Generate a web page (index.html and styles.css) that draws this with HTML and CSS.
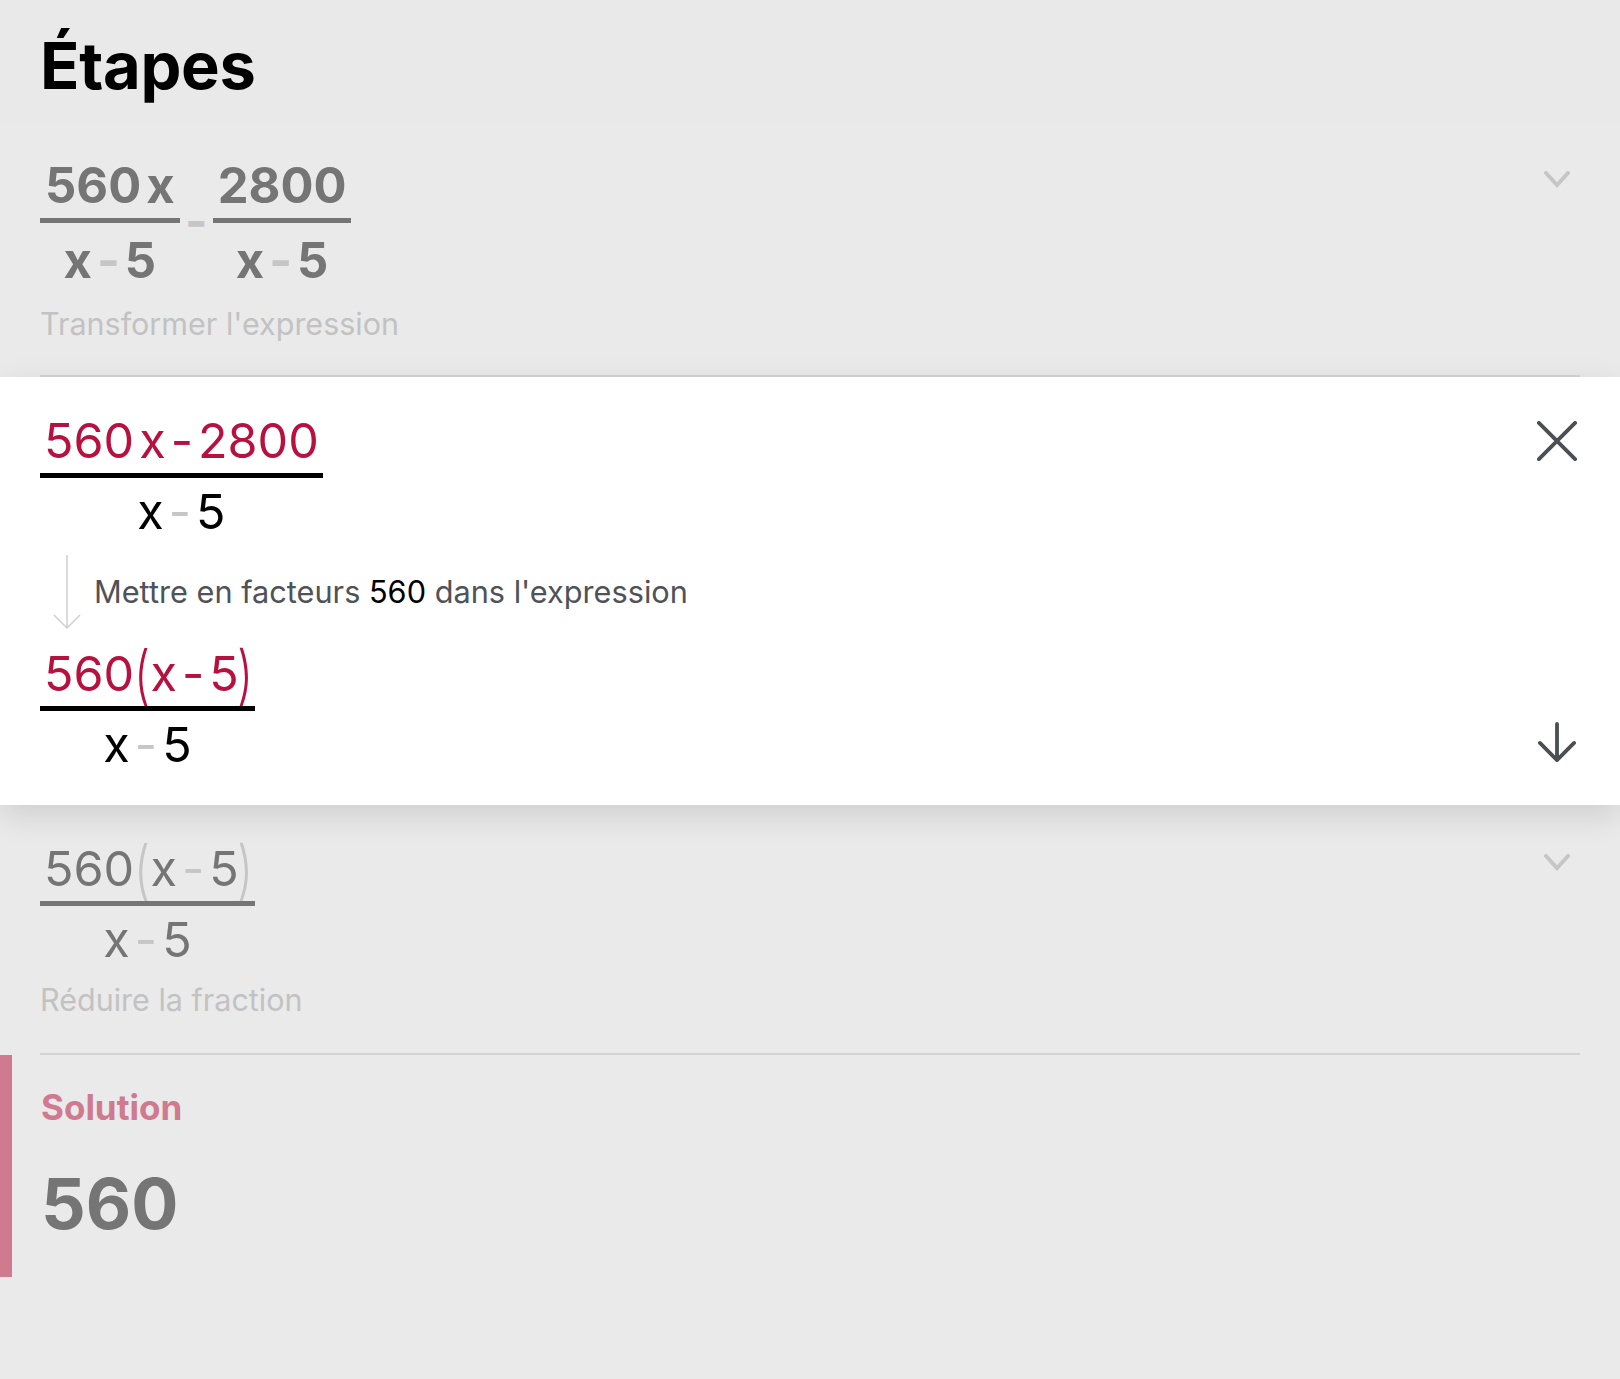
FILE: index.html
```html
<!DOCTYPE html>
<html lang="fr">
<head>
  <meta charset="UTF-8" />
  <meta name="viewport" content="width=device-width, initial-scale=1" />
  <title>Étapes</title>
  <link rel="stylesheet" href="styles.css">
</head>
<body>
  <div class="page">
    <h1 class="title">Étapes</h1>

    <!-- etape 1 -->
    <div class="step step-first">
      <div class="step-head">
        <div class="expr bold">
          <div class="frac">
            <div class="num"><span>560</span><span class="var">x</span></div>
            <div class="den"><span>x</span><span class="minus">-</span><span>5</span></div>
          </div>
          <span class="op">-</span>
          <div class="frac">
            <div class="num"><span>2800</span></div>
            <div class="den"><span>x</span><span class="minus">-</span><span>5</span></div>
          </div>
        </div>
        <svg class="chevron" viewBox="0 0 26 18"><path d="M2 2l11 12L24 2" /></svg>
      </div>
      <p class="hint">Transformer l'expression</p>
    </div>

    <!-- etape ouverte -->
    <div class="detail">
      <div class="detail-top">
        <div class="frac frac-open">
          <div class="num red"><span>560</span><span class="var">x</span><span class="red-minus">-</span><span>2800</span></div>
          <div class="den"><span>x</span><span class="minus">-</span><span>5</span></div>
        </div>
        <svg class="icon-close" viewBox="0 0 42 42"><path d="M2 2l38 38M40 2L2 40" /></svg>
      </div>
      <div class="explain">
        <svg class="flow-arrow" viewBox="0 0 28 74"><path d="M14 0v73M1 60l13 13 13-13" /></svg>
        <p class="explain-text">Mettre en facteurs <span class="dark">560</span> dans l'expression</p>
      </div>
      <div class="detail-bottom">
        <div class="frac frac-open">
          <div class="num red"><span>560</span><span class="paren paren-open">(</span><span>x</span><span class="red-minus">-</span><span>5</span><span class="paren">)</span></div>
          <div class="den"><span>x</span><span class="minus">-</span><span>5</span></div>
        </div>
        <svg class="icon-down" viewBox="0 0 40 42"><path d="M20 2v38M2 22l18 18 18-18" /></svg>
      </div>
    </div>

    <!-- etape 3 -->
    <div class="step step-last">
      <div class="step-head">
        <div class="expr">
          <div class="frac frac-open">
            <div class="num"><span>560</span><span class="paren paren-open pale">(</span><span>x</span><span class="minus">-</span><span>5</span><span class="paren pale">)</span></div>
            <div class="den"><span>x</span><span class="minus">-</span><span>5</span></div>
          </div>
        </div>
        <svg class="chevron" viewBox="0 0 26 18"><path d="M2 2l11 12L24 2" /></svg>
      </div>
      <p class="hint">Réduire la fraction</p>
    </div>

    <div class="solution">
      <h2 class="solution-title">Solution</h2>
      <div class="solution-value">560</div>
    </div>
  </div>
</body>
</html>
```
FILE: styles.css
```css
* {
  box-sizing: border-box;
}

body {
  margin: 0;
  font-family: Inter, "Noto Sans", sans-serif;
  background-color: #eaeaeb;
}

.page {
  height: 100vh;
  overflow: hidden;
}

.title {
  margin: 0;
  padding: 23px 40px 0;
  height: 125px;
  font-size: 65px;
  line-height: 86px;
  font-weight: 700;
  letter-spacing: -0.3px;
  color: #000;
  background-color: #e9e9ea;
}

.step {
  margin: 0 40px;
  border-bottom: 2px solid #d3d3d4;
}

.step-first {
  height: 252px;
  padding-top: 32px;
}

.step-last {
  height: 250px;
  padding-top: 35px;
}

.step-head {
  display: flex;
  justify-content: space-between;
  align-items: flex-start;
}

.expr {
  display: flex;
  align-items: flex-start;
  color: #757575;
}

.bold {
  font-weight: 700;
}

.frac {
  display: flex;
  flex-direction: column;
  align-items: center;
  font-size: 49px;
}

.num {
  display: flex;
  justify-content: center;
  align-items: center;
  height: 66px;
  padding: 0 4px 4px;
  border-bottom: 5px solid currentColor;
}

.bold .num {
  padding: 0 5px 4px;
}

.den {
  display: flex;
  justify-content: center;
  align-items: center;
  height: 74px;
}

.var {
  margin-left: 5px;
}

.minus {
  margin: 0 5px;
  color: #c6c6c7;
}

.op {
  width: 33px;
  margin-top: 33px;
  text-align: center;
  font-size: 48px;
  line-height: 62px;
  color: #c6c6c7;
}

.hint {
  margin: 5px 0 0;
  font-size: 30.5px;
  line-height: 44px;
  color: #c2c2c3;
}

.step-last .hint {
  margin-top: 6px;
}

.chevron {
  width: 26px;
  height: 18px;
  margin: 14px 10px 0 0;
  fill: none;
  stroke: #c6c6c7;
  stroke-width: 4;
  stroke-linecap: round;
}

.detail {
  position: relative;
  height: 428px;
  padding: 35px 43px 0 40px;
  background-color: #fff;
  box-shadow: 0 10px 30px rgba(0, 0, 0, 0.12);
}

.detail-top,
.detail-bottom {
  display: flex;
  justify-content: space-between;
}

.detail-bottom {
  align-items: flex-end;
  margin-top: 5px;
}

.frac-open {
  color: #000;
  font-size: 48.5px;
}

.expr .frac-open {
  color: #757575;
}

.frac-open .den {
  height: 66px;
  font-weight: 400;
}

.frac-open .num {
  border-bottom-color: #000;
}

.expr .frac-open .num {
  border-bottom-color: #757575;
}

.frac-open .red {
  color: #b8113f;
}

.red-minus {
  margin: 0 5px;
}

.paren {
  font-size: 64px;
  font-weight: 300;
  line-height: 1;
  margin: 0 -5px;
  transform: scaleX(0.7);
}

.paren-open {
  margin: 0 -3px;
}

.expr .frac-open .num .pale {
  color: #c6c6c7;
}

.icon-close {
  width: 40px;
  height: 40px;
  margin-top: 9px;
  fill: none;
  stroke: #4b4e53;
  stroke-width: 4;
  stroke-linecap: round;
}

.icon-down {
  width: 38px;
  height: 40px;
  margin: 0 1px 15px 0;
  fill: none;
  stroke: #4b4e53;
  stroke-width: 4;
  stroke-linecap: round;
  stroke-linejoin: round;
}

.explain {
  display: flex;
  align-items: center;
  gap: 13px;
  height: 96px;
  padding-left: 13px;
}

.flow-arrow {
  width: 28px;
  height: 74px;
  fill: none;
  stroke: #d0d0d0;
  stroke-width: 1.5;
}

.explain-text {
  margin: -2px 0 0;
  font-size: 30.7px;
  color: #4f5257;
}

.dark {
  color: #000;
}

.solution {
  height: 222px;
  padding: 28px 0 0 29px;
  border-left: 12px solid #cf7a8f;
}

.solution-title {
  margin: 0;
  font-size: 35px;
  line-height: 48px;
  font-weight: 700;
  color: #cf7a8f;
}

.solution-value {
  margin-top: 31px;
  font-size: 70px;
  line-height: 84px;
  font-weight: 700;
  color: #757575;
}
```
